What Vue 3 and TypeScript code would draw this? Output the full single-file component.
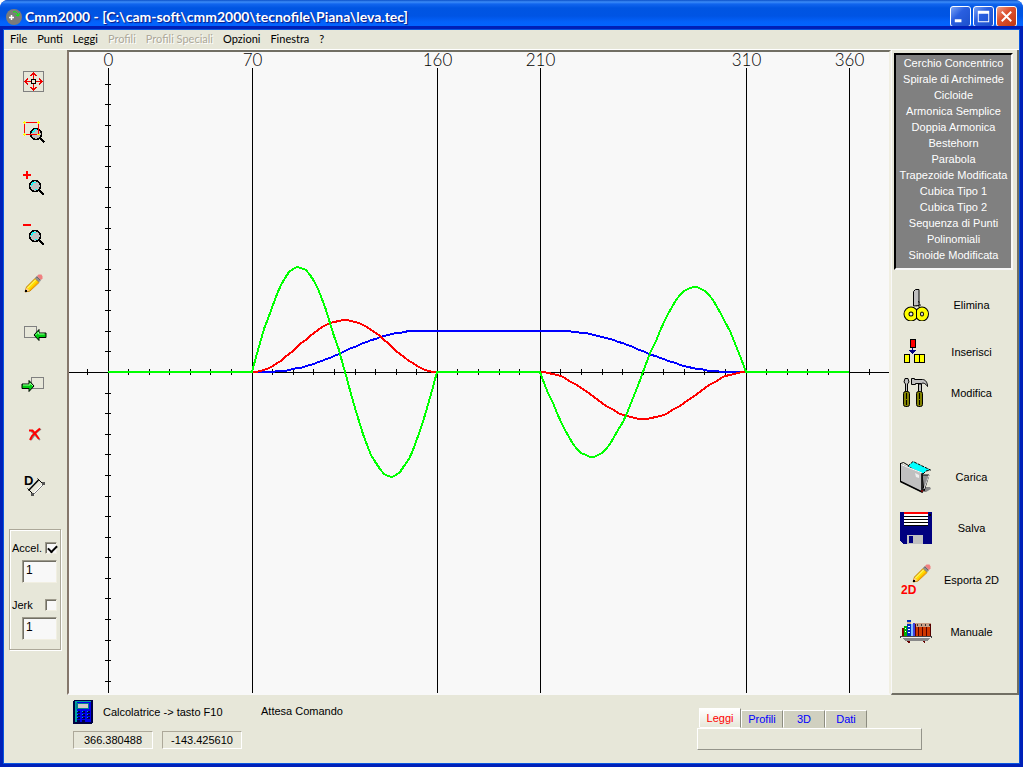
<script setup lang="ts">
import { computed, ref } from 'vue'

interface MenuEntry {
  label: string
  disabled?: boolean
}

interface Action {
  id: string
  label: string
  spaced?: string
}

const menu: MenuEntry[] = [
  { label: 'File' },
  { label: 'Punti' },
  { label: 'Leggi' },
  { label: 'Profili', disabled: true },
  { label: 'Profili Speciali', disabled: true },
  { label: 'Opzioni' },
  { label: 'Finestra' },
  { label: '?' },
]

const tools: string[] = [
  'Adatta', 'Zoom finestra', 'Ingrandisci', 'Riduci', 'Matita',
  'Indietro', 'Avanti', 'Cancella', 'Distanza',
]

const laws: string[] = [
  'Cerchio Concentrico', 'Spirale di Archimede', 'Cicloide', 'Armonica Semplice',
  'Doppia Armonica', 'Bestehorn', 'Parabola', 'Trapezoide Modificata',
  'Cubica Tipo 1', 'Cubica Tipo 2', 'Sequenza di Punti', 'Polinomiali', 'Sinoide Modificata',
]

const actions: Action[] = [
  { id: 'cut', label: 'Elimina', spaced: 'near' },
  { id: 'insert', label: 'Inserisci', spaced: 'medium' },
  { id: 'edit', label: 'Modifica', spaced: 'tight' },
  { id: 'load', label: 'Carica', spaced: 'wide' },
  { id: 'save', label: 'Salva', spaced: 'near' },
  { id: 'export', label: 'Esporta 2D' },
  { id: 'manual', label: 'Manuale' },
]

const tabs: string[] = ['Leggi', 'Profili', '3D', 'Dati']
const activeTab = ref('Leggi')
const showAccel = ref(true)
const showJerk = ref(false)
const accelScale = ref('1')
const jerkScale = ref('1')

// Plot space: degrees on the horizontal axis, one tick every ten units.
const ORIGIN_X = 39
const ORIGIN_Y = 320
const UNIT = 741 / 360
const TAU = Math.PI * 2

const px = (deg: number): number => ORIGIN_X + deg * UNIT
const col = (deg: number): number => Math.floor(px(deg) + 0.01) + 0.5
const marks: number[] = [0, 70, 160, 210, 310, 360]

const xTicks: number[] = Array.from({ length: 39 }, (_, i) => col((i - 1) * 10))
const yTicks: number[] = Array.from({ length: 30 }, (_, i) => Math.round(ORIGIN_Y + (i - 14) * 10 * UNIT) + 0.5)

type Law = (deg: number) => number

// Cycloidal rise between 70 and 160 degrees, cycloidal return between 210 and 310.
function segment(deg: number, rise: Law, dwell: number, fall: Law): number {
  if (deg > 70 && deg < 160) return rise((deg - 70) / 90)
  if (deg >= 160 && deg <= 210) return dwell
  if (deg > 210 && deg < 310) return fall((deg - 210) / 100)
  return 0
}

const lift: Law = (d) =>
  segment(d, (u) => 41.5 * (u - Math.sin(TAU * u) / TAU), 41.5, (u) => 41.5 * (1 - u + Math.sin(TAU * u) / TAU))
const speed: Law = (d) =>
  segment(d, (u) => 26 * (1 - Math.cos(TAU * u)), 0, (u) => -23.5 * (1 - Math.cos(TAU * u)))
const accel: Law = (d) =>
  segment(d, (u) => 105 * Math.sin(TAU * u), 0, (u) => -85 * Math.sin(TAU * u))

function trace(law: Law): string {
  const pts: string[] = []
  for (let d = 0; d <= 360; d += 2) {
    pts.push(`${Math.round(px(d))},${Math.round(ORIGIN_Y - law(d))}`)
  }
  return pts.join(' ')
}

const liftLine = trace(lift)
const speedLine = trace(speed)
const accelLine = computed(() => (showAccel.value ? trace(accel) : ''))
</script>

<template>
  <div class="window">
    <header class="titlebar">
      <svg class="logo" viewBox="0 0 16 16" aria-hidden="true">
        <circle cx="8" cy="8" r="8" fill="#7c7c7c" />
        <path d="M3 8.500h5M5.500 6v5" stroke="#fff" stroke-width="1.500" />
        <path d="M7 3c3-1 5 1 5 4M9.500 6l3 1 1-3" stroke="#0f0" fill="none" />
      </svg>
      <h1>Cmm2000 - [C:\cam-soft\cmm2000\tecnofile\Piana\leva.tec]</h1>
      <div class="controls">
        <button type="button" aria-label="Riduci a icona">
          <svg viewBox="0 0 20 20"><path d="M4 13h7v3H4z" fill="#fff" /></svg>
        </button>
        <button type="button" aria-label="Ingrandisci">
          <svg viewBox="0 0 20 20"><path d="M4 4h12v12H4zM5 7v8h10V7z" fill="#fff" fill-rule="evenodd" /></svg>
        </button>
        <button type="button" class="close" aria-label="Chiudi">
          <svg viewBox="0 0 20 20"><path d="M5 5l10 10M15 5L5 15" stroke="#fff" stroke-width="2" /></svg>
        </button>
      </div>
    </header>

    <div class="client">
      <nav class="menu">
        <button v-for="m in menu" :key="m.label" type="button" :disabled="m.disabled">{{ m.label }}</button>
      </nav>

      <main class="work">
        <aside class="tools">
          <div class="toolset">
            <button v-for="(t, i) in tools" :key="t" type="button" :aria-label="t">
              <svg viewBox="0 0 32 32">
                <g v-if="i === 0" shape-rendering="crispEdges">
                  <rect x="5.500" y="3.500" width="20" height="20" fill="none" stroke="#808080" />
                  <path d="M15.500 5v17M7 13.500h18" stroke="#e00" />
                  <path d="M12.500 8l3-3 3 3M12.500 19l3 3 3-3M10 10.500l-3 3 3 3M21 10.500l3 3-3 3" fill="none" stroke="#e00" />
                  <rect x="13.500" y="11.500" width="4" height="4" fill="#e7e7d9" stroke="#000" />
                </g>
                <g v-else-if="i === 1" shape-rendering="crispEdges">
                  <circle cx="18" cy="16" r="5.500" fill="#c0c0c0" stroke="#000" stroke-width="1.500" />
                  <path d="M14.500 15v-2h2v-1.500h2" fill="none" stroke="#0ff" />
                  <path d="M6.500 4.500h14v12h-14z" fill="none" stroke="#f00" />
                  <path d="M22 20l4.500 4.500" stroke="#000" stroke-width="2" />
                  <path d="M5 4.500h3M6.500 3v3M19 4.500h3M20.500 3v3M5 16.500h3M6.500 15v3M19 16.500h3" stroke="#ff0" />
                </g>
                <g v-else-if="i === 2 || i === 3" shape-rendering="crispEdges">
                  <path v-if="i === 2" d="M5 6h3V3h2v3h3v2h-3v3H8V8H5z" fill="#f00" />
                  <path v-else d="M5 6h8v2H5z" fill="#f00" />
                  <circle cx="17" cy="18" r="5.500" fill="#c0c0c0" stroke="#000" stroke-width="1.500" />
                  <path d="M13.500 18v-2h1v-2h3M19.500 20.500l-2 1.500" fill="none" stroke="#0ff" />
                  <path d="M21 22l5 5" stroke="#000" stroke-width="2" />
                </g>
                <g v-else-if="i === 4">
                  <path d="M7 24l1.500-5L17 10.500l4 4L12 23z" fill="#ffe000" stroke="#c08010" />
                  <path d="M9.500 20L18 11.500" stroke="#fff8a0" /><path d="M12 22l8-8" stroke="#ffb000" stroke-width="1.500" />
                  <path d="M7.500 23.500l1-4 3 3z" fill="#ffc890" /><path d="M7 22h2v2H7z" fill="#000" />
                  <path d="M17 10l2-2 4 4-2 2z" fill="#686868" /><path d="M18 9.500l4 4" stroke="#bbb" />
                  <path d="M19 8l1.500-1.500h3l1 2v2L23 12z" fill="#f08080" />
                </g>
                <g v-else-if="i === 5 || i === 6">
                  <rect :x="i === 5 ? 6.5 : 13.5" :y="i === 5 ? 8.5 : 9.5" width="12" height="11" fill="none" stroke="#808080" />
                  <path v-if="i === 5" d="M16 17l5-5.500V15h7v4.500h-7V22.500z" fill="#0c1" stroke="#000" />
                  <path v-if="i === 5" d="M17.500 17l3-3v2h6" fill="none" stroke="#9f9" />
                  <path v-if="i === 6" d="M16 18l-5-5.500V16H4v4.500h7V23.500z" fill="#0c1" stroke="#000" />
                  <path v-if="i === 6" d="M5 17h7v-2l3 3" fill="none" stroke="#9f9" />
                </g>
                <g v-else-if="i === 7" fill="none">
                  <path d="M13 13l9 9M23 11l-5 4-5 7" stroke="#888" stroke-width="1.500" />
                  <path d="M11 12.500h3.500l3 3.500 3.500 5M22 10.500l-4 3.500-4 4-2 4" stroke="#f00" stroke-width="2" />
                </g>
                <g v-else>
                  <text x="6" y="17" class="glyph">D</text>
                  <path d="M10.500 22.500L20.500 12" stroke="#000" stroke-width="1.500" />
                  <path d="M9.500 20.500l5 5M19.500 10.500l5 5" stroke="#000" />
                  <path d="M14.500 27L25.500 16" stroke="#fff" stroke-width="2" /><path d="M15.500 26.500l10-10" stroke="#777" />
                  <path d="M13 25h3v3h-3zM24 14h3v3h-3z" fill="#555" />
                </g>
              </svg>
            </button>
          </div>

          <div class="scales">
            <div class="scale">
              <label for="accel">Accel.</label>
              <input id="accel" v-model="showAccel" type="checkbox">
            </div>
            <input v-model="accelScale" type="text" aria-label="Scala accelerazione">
            <div class="scale second">
              <label for="jerk">Jerk</label>
              <input id="jerk" v-model="showJerk" type="checkbox">
            </div>
            <input v-model="jerkScale" type="text" aria-label="Scala jerk">
          </div>
        </aside>

        <section class="plot">
          <svg viewBox="0 0 820 641">
            <g shape-rendering="crispEdges" stroke="#000" fill="none">
              <path d="M0 320.500H820" />
              <path v-for="m in marks" :key="m" :d="`M${col(m)} 16V641`" />
              <path v-for="x in xTicks" :key="x" :d="`M${x} 317v6`" />
              <path v-for="y in yTicks" :key="y" :d="`M36 ${y}h6`" />
            </g>
            <g class="curves" shape-rendering="crispEdges">
              <polyline :points="liftLine" stroke="#00f" />
              <polyline :points="speedLine" stroke="#f00" />
              <polyline :points="accelLine" stroke="#0f0" />
            </g>
            <text v-for="m in marks" :key="m" :x="col(m)" y="14" text-anchor="middle">{{ m }}</text>
          </svg>
        </section>

        <aside class="side">
          <ul class="laws">
            <li v-for="l in laws" :key="l">{{ l }}</li>
          </ul>
          <button v-for="a in actions" :key="a.id" type="button" class="action" :class="a.spaced">
            <svg viewBox="0 0 32 32">
              <g v-if="a.id === 'cut'">
                <path d="M13.500 17V2.500l2-2h3.500v16z" fill="#c0c0c0" stroke="#000" />
                <path d="M18.500 12l2 5h-4" stroke="#000" stroke-dasharray="2 1" fill="none" />
                <ellipse cx="11" cy="25" rx="4.500" ry="4.500" fill="none" stroke="#000" stroke-width="6" />
                <ellipse cx="22" cy="25" rx="4" ry="4.500" fill="none" stroke="#000" stroke-width="6" />
                <ellipse cx="11" cy="25" rx="4.500" ry="4.500" fill="none" stroke="#ff0" stroke-width="4" />
                <ellipse cx="22" cy="25" rx="4" ry="4.500" fill="none" stroke="#ff0" stroke-width="4" />
                <path d="M16.500 20v10" stroke="#000" />
              </g>
              <g v-else-if="a.id === 'insert'" shape-rendering="crispEdges" stroke="#000">
                <rect x="10.500" y="3.500" width="5" height="8" fill="#f00" />
                <path d="M12 12h1v2h3l-3.500 4L9 14h3z" fill="#000080" stroke="none" />
                <path d="M4.500 18.500h5v8h-5zM14.500 18.500h5v8h-5zM19.500 18.500h5v8h-5z" fill="#ff0" />
              </g>
              <g v-else-if="a.id === 'edit'" stroke="#000">
                <path d="M5.500 15V7l-1.500-2 1-3.500h3l1 3.500-1.500 2v8z" fill="#c0c0c0" />
                <rect x="3.500" y="14.500" width="6" height="15" rx="2" fill="#808000" />
                <path d="M6.500 16v12" stroke-dasharray="6 1" />
                <path d="M18.500 15V7h3v8" fill="#c0c0c0" />
                <path d="M11.500 1.500h3v1h8c3 0 5 3 5 7-2-3-4-4-6-3h-6v1h-4z" fill="#c0c0c0" />
                <rect x="16.500" y="14.500" width="6" height="15" rx="2" fill="#808000" />
                <path d="M19.500 16v12" stroke-dasharray="6 1" />
              </g>
              <g v-else-if="a.id === 'load'">
                <path d="M22 26h8l1 2-5 3h-5z" fill="#888" />
                <path d="M22 14l7 0-5 16z" fill="#909090" stroke="#000" />
                <path d="M29 14l-5 14" stroke="#ddd" />
                <path d="M8 5l5-4.500L30.500 9 26 10l-4 4z" fill="#0ff" stroke="#000" stroke-dasharray="3 1" />
                <path d="M.5 3L22 12v19L.5 20.500z" fill="#c0c0c0" stroke="#777" />
                <path d="M.5 20.500L22 31V12" fill="none" stroke="#000" stroke-width="1.500" />
                <path d="M1 3.500L22 12" stroke="#fff" /><path d="M.5 2v19M.5 2.500l3-1 5 3" fill="none" stroke="#000" />
                <path d="M15 12l4 2v3l-3-1z" fill="#eee" /><path d="M22 29v2" stroke="#c00" />
              </g>
              <g v-else-if="a.id === 'save'" shape-rendering="crispEdges">
                <path d="M0 0h32v32H3l-3-3z" fill="#000080" />
                <path d="M4 0h24v2H4z" fill="#f00" /><path d="M4 2h24v12H4z" fill="#fff" />
                <path d="M4 4.500h24M4 7.500h24M4 10.500h24M4 13.500h24" stroke="#000" />
                <path d="M7 23h16v9H7z" fill="#c0c0c0" /><path d="M9 24h4v7H9z" fill="#000080" />
                <path d="M29 2h2v2h-2z" fill="#000" />
              </g>
              <g v-else-if="a.id === 'export'">
                <path d="M13 18l1.500-5L23 4.500l4 4L18 17z" fill="#ffe000" stroke="#c08010" />
                <path d="M15.500 14L24 5.500" stroke="#fff8a0" /><path d="M18 16l8-8" stroke="#ffb000" stroke-width="1.500" />
                <path d="M13.500 17.500l1-4 3 3z" fill="#ffc890" /><path d="M13 16h2v2h-2z" fill="#000" />
                <path d="M23 4l2-2 4 4-2 2z" fill="#686868" /><path d="M24 3.500l4 4" stroke="#bbb" />
                <path d="M25 2l1.500-1.500h3l1 2v2L29 6z" fill="#f08080" />
                <text x="1" y="30" class="glyph red">2D</text>
              </g>
              <g v-else shape-rendering="crispEdges">
                <path d="M2 12h2v8H2z" fill="#800000" /><path d="M4 10h3v10H4z" fill="#00b000" />
                <path d="M7 4h4v16H7z" fill="#0030c0" /><path d="M7 6h4v2H7z" fill="#d8b090" />
                <path d="M8 10h2v1H8zM8 13h2v1H8zM8 16h2v1H8zM5 12h1v1H5zM5 15h1v1H5z" fill="#fff" />
                <path d="M11 8h2v12h-2z" fill="#80c0ff" /><path d="M13 7h2v13h-2z" fill="#4040e0" />
                <path d="M15 7h16v4H15z" fill="#c8a088" /><path d="M15 11h16v9H15z" fill="#d03800" />
                <path d="M15.500 8v12M18.500 11v9M22.500 11v9M26.500 11v9M30.500 8v12" stroke="#500" />
                <path d="M17 8h1v2h-1zM21 8h1v2h-1zM25 8h1v2h-1zM29 8h1v2h-1z" fill="#333" />
                <path d="M0 20h32v2H0z" fill="#444" /><path d="M1 21h30v1H1z" fill="#eee" /><path d="M2 22h28l-3 3H5z" fill="#888" />
                <path d="M3 24h26M7 25h3v2H8zM22 25h3v2h-1z" fill="#600" />
              </g>
            </svg>
            <span>{{ a.label }}</span>
          </button>
        </aside>
      </main>

      <footer class="status">
        <button type="button" class="calc">
          <svg viewBox="0 0 20 24" shape-rendering="crispEdges">
            <path d="M0 1h1V0h19v23h-1v1H0z" fill="#000040" />
            <path d="M2 1h16v2H4v19H2z" fill="#00a0a0" /><path d="M4 2h14v20H4z" fill="#0000f0" />
            <path d="M3 3h13v6H3z" fill="#008090" /><path d="M5 4h10v4H5z" fill="#d0c8c8" />
            <path d="M4 11h3v2H4zM9 11h3v2H9zM14 11h3v2h-3zM4 14h3v2H4zM9 14h3v2H9zM14 14h3v2h-3zM4 17h3v2H4zM9 17h3v2H9zM14 17h3v2h-3zM4 20h3v2H4zM9 20h3v2H9z" fill="#000050" />
            <path d="M4 11h1v1H4zM9 11h1v1H9zM14 11h1v1h-1zM4 14h1v1H4zM9 14h1v1H9zM14 14h1v1h-1zM4 17h1v1H4zM9 17h1v1H9zM14 17h1v1h-1z" fill="#00a0e0" />
          </svg>
          <span>Calcolatrice -&gt; tasto F10</span>
        </button>
        <p class="message">Attesa Comando</p>
        <div class="coords">
          <output>366.380488</output>
          <output>-143.425610</output>
        </div>
        <div class="pages">
          <div class="tabs" role="tablist">
            <button
              v-for="t in tabs" :key="t" type="button" role="tab"
              :aria-selected="t === activeTab" :class="{ active: t === activeTab }" @click="activeTab = t"
            >{{ t }}</button>
          </div>
          <div class="page" role="tabpanel" :aria-label="activeTab"></div>
        </div>
      </footer>
    </div>
  </div>
</template>

<style>
body { background: #fff; }
</style>

<style scoped>
* { box-sizing: border-box; }
button { border: 0; padding: 0; background: none; color: inherit; font: inherit; }
svg { display: block; }
.window {
  display: flex;
  flex-direction: column;
  min-height: 100vh;
  border-radius: 8px 8px 0 0;
  overflow: hidden;
  background: #0842d8;
  font: 11px/16px "Liberation Sans", sans-serif;
  color: #000;
}
.titlebar {
  display: flex;
  align-items: center;
  height: 30px;
  padding: 3px 6px 0;
  background: linear-gradient(#0a4fc8 0, #3c8cf8 2px, #1165ee 4px, #0055e2 8px, #0054e4 16px, #0362fb 22px, #0264ff 26px, #0050dd 28px, #0043c8 30px);
}
.logo { width: 16px; height: 16px; margin-right: 3px; }
h1 {
  flex: 1;
  margin: 0;
  color: #fff;
  font: bold 14px/20px "Lato", sans-serif;
  text-shadow: 1px 1px 1px #0a1883;
  white-space: nowrap;
}
.controls { display: flex; gap: 2px; }
.controls button {
  width: 21px;
  height: 21px;
  border: 1px solid #fff;
  border-radius: 3px;
  background: linear-gradient(135deg, #7da5f5, #2a5fe0 40%, #1c50cc);
}
.controls svg { width: 19px; height: 19px; }
.controls .close { background: linear-gradient(135deg, #f0a08a, #dd5230 40%, #c03812); }
.client {
  flex: 1;
  display: flex;
  flex-direction: column;
  margin: 0 4px 4px;
  background: #e7e7d9;
  box-shadow: 0 0 0 1px #0855e0, 0 0 0 4px #0020b8;
}
.menu {
  display: flex;
  align-items: flex-start;
  gap: 10px;
  height: 20px;
  padding: 0 6px;
  border-bottom: 1px solid #fff;
  font: 11px/18px "Lato", sans-serif;
}
.menu button:disabled { color: #aca899; text-shadow: 1px 1px 0 #fff; }
.work { flex: 1; display: grid; grid-template-columns: 63px 1fr 128px; }
.tools { display: flex; flex-direction: column; padding-top: 18px; }
.toolset { display: flex; flex-direction: column; gap: 18px; padding-left: 14px; }
.toolset button, .toolset svg { width: 32px; height: 32px; }
.glyph { font: bold 13px "Liberation Sans", sans-serif; }
.glyph.red { fill: #f00; font-size: 12px; }
.scales {
  width: 52px;
  height: 121px;
  margin: 29px 0 0 5px;
  padding: 10px 3px 0 2px;
  border: 1px solid #aca899;
  box-shadow: inset 1px 1px #fff, 1px 1px #fff;
}
.scale { display: flex; align-items: center; justify-content: space-between; height: 16px; }
.scale.second { margin-top: 14px; }
.scales input {
  border: 1px solid;
  border-color: #9d9a8c #f1efe2 #f1efe2 #9d9a8c;
  border-radius: 0;
  background: #f8f8f8;
  box-shadow: inset 1px 1px #716f64;
}
.scales input[type="text"] {
  display: block;
  width: 35px;
  height: 23px;
  margin: 4px 0 0 10px;
  padding: 0 3px 3px;
  font: 12px/16px "Liberation Sans", sans-serif;
}
.scales input[type="checkbox"] { appearance: none; width: 12px; height: 12px; margin: 0; position: relative; }
.scales input[type="checkbox"]:checked::after {
  content: "";
  position: absolute;
  left: 2px;
  top: 2px;
  width: 7px;
  height: 4px;
  border: solid #000;
  border-width: 0 0 2px 2px;
  transform: rotate(-45deg);
}
.plot {
  border: 2px solid;
  border-color: #716f64 #f1efe2 #f8f8f8 #85776b;
  background: #f8f8f8;
}
.plot svg { width: 100%; height: 100%; overflow: visible; }
.plot text { font: 300 17px "Lato", "Noto Sans", sans-serif; }
.curves { fill: none; stroke-width: 2px; }
.side {
  padding: 3px 4px 0 2px;
  border: solid;
  border-width: 0 2px 2px 1px;
  border-color: #f8f8f8 #716f64 #716f64 #f8f8f8;
}
.laws {
  height: 217px;
  margin: 0;
  padding: 0;
  border: 2px solid;
  border-color: #000 #f8f8f8 #f8f8f8 #000;
  background: #808080;
  color: #fff;
  text-align: center;
  white-space: nowrap;
  list-style: none;
}
.action { display: flex; align-items: center; width: 100%; height: 32px; margin-top: 20px; padding-left: 6px; }
.action.near { margin-top: 19px; }
.action.tight { margin-top: 9px; }
.action.medium { margin-top: 15px; }
.action.wide { margin-top: 52px; }
.action svg { width: 32px; height: 32px; }
.action span { flex: 1; padding: 0 2px 1px 0; text-align: center; }
.status {
  display: grid;
  grid-template-columns: 188px 1fr 225px;
  grid-template-rows: 33px 35px;
  height: 68px;
  padding: 0 97px 0 69px;
}
.calc { display: flex; align-items: center; gap: 10px; }
.calc svg { width: 20px; height: 24px; }
.message { margin: 0; line-height: 32px; }
.coords { display: flex; gap: 9px; grid-area: 2 / 1 / 3 / 3; padding-top: 3px; }
output {
  width: 80px;
  height: 18px;
  border: 1px solid;
  border-color: #aca899 #fff #fff #aca899;
  text-align: center;
}
.pages { grid-area: 1 / 3 / 3 / 4; padding-top: 13px; }
.tabs { display: flex; align-items: flex-end; height: 20px; padding-left: 2px; color: #00f; }
.tabs button {
  width: 42px;
  height: 18px;
  border: 1px solid;
  border-color: #fff #8c8c80 transparent #fff;
  background: #d0d0c0;
}
.tabs .active { height: 20px; background: linear-gradient(#fff, #e7e7d9); color: #f00; }
.page { height: 22px; border: 1px solid; border-color: #fff #94948a #94948a #fff; }
</style>
